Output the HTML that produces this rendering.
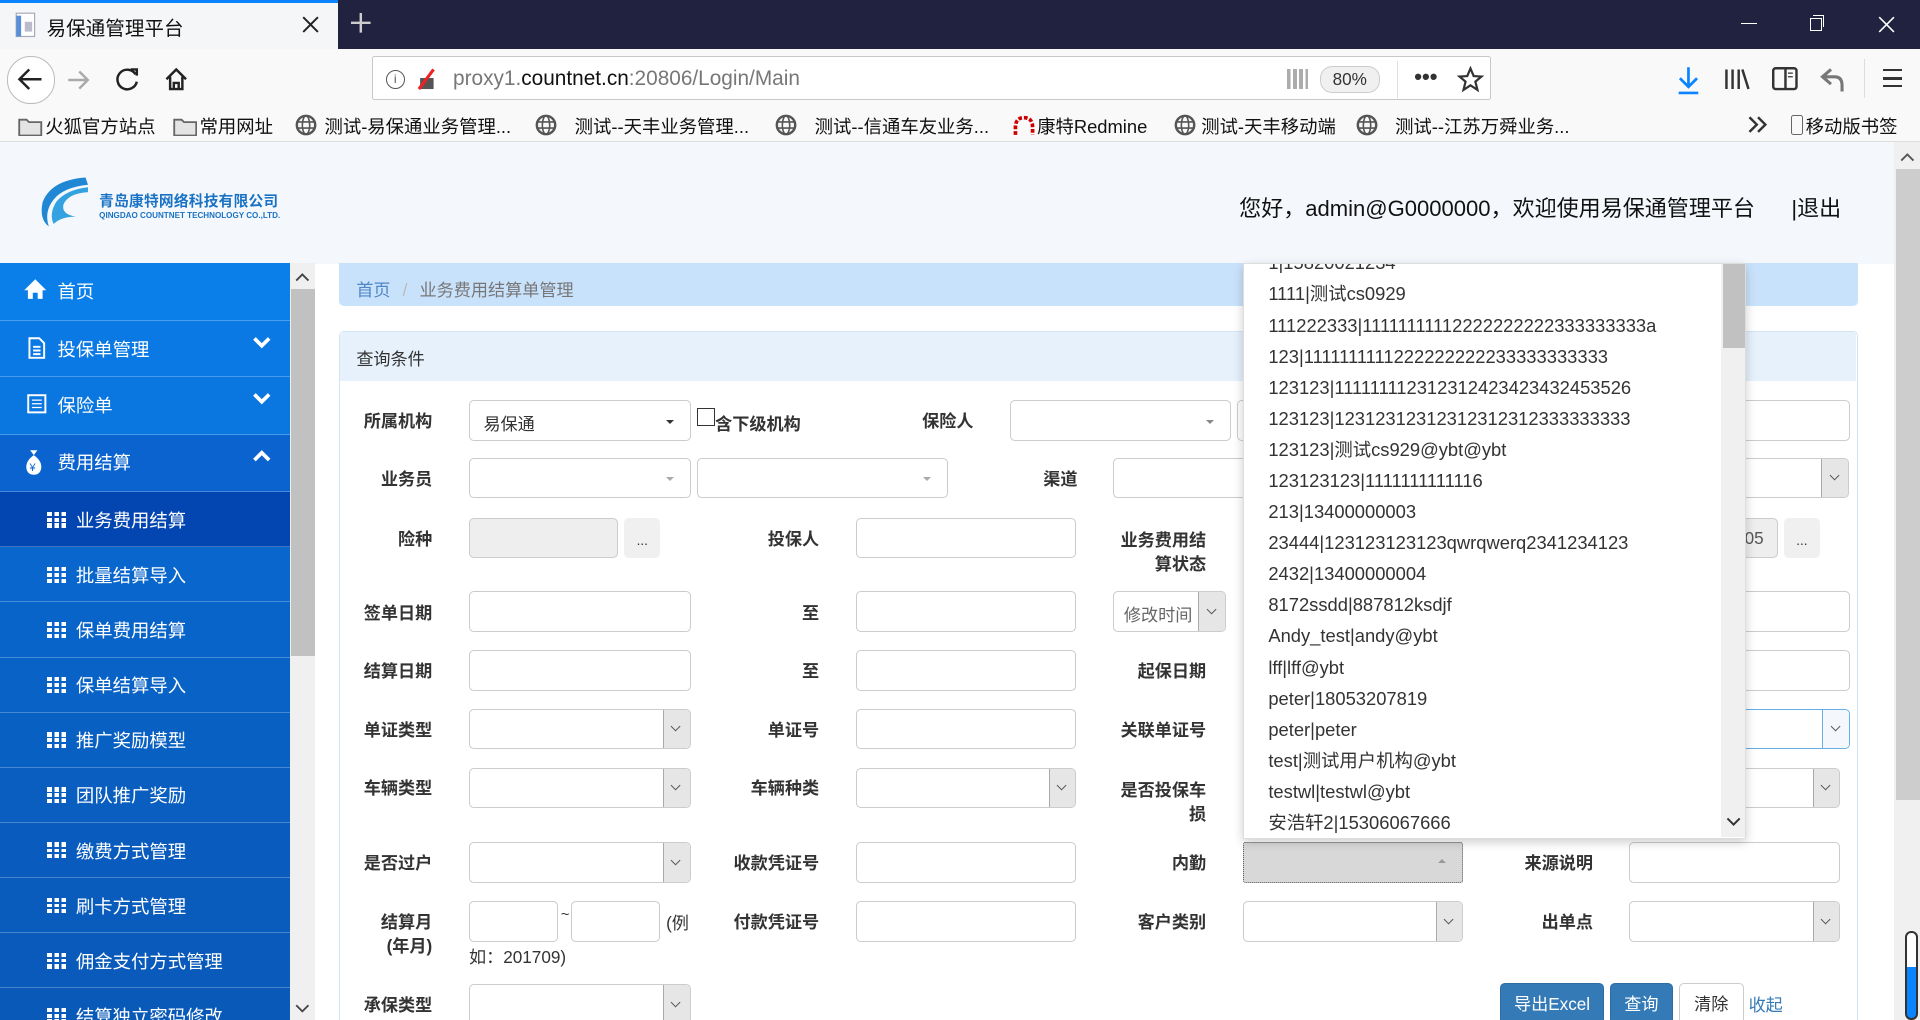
<!DOCTYPE html>
<html><head><meta charset="utf-8">
<style>
html,body{margin:0;padding:0;width:1920px;height:1020px;overflow:hidden;background:#fff;}
#w{zoom:1.22449;width:1568px;height:833px;position:relative;overflow:hidden;font-family:"Liberation Sans","Noto Sans CJK SC",sans-serif;color:#333;}
.a{position:absolute;}
.lb{position:absolute;width:140px;text-align:right;font-weight:bold;font-size:14px;color:#333;line-height:20px;}
.in{position:absolute;box-sizing:border-box;border:1px solid #ccc;border-radius:4px;background:#fff;height:33px;}
.sa{position:absolute;right:0;top:0;bottom:0;width:21px;background:#e6e6e6;border-left:1px solid #aaa;border-radius:0 3px 3px 0;}
.sa:after{content:"";position:absolute;left:7px;top:11px;width:5px;height:5px;border-right:1px solid #555;border-bottom:1px solid #555;transform:rotate(45deg);}
.ct{position:absolute;right:13px;top:15px;width:0;height:0;border-left:4px solid transparent;border-right:4px solid transparent;border-top:4px solid #888;}
.nav{position:absolute;left:0;width:237px;height:45px;border-bottom:1px solid rgba(255,255,255,.25);color:#fff;font-size:15px;box-sizing:border-box;}
.nav span{position:absolute;top:12px;}
.sub span{left:62px;}
.g{position:absolute;left:38px;top:16px;width:16px;height:13px;background:
linear-gradient(90deg,#fff 4px,transparent 4px,transparent 6px,#fff 6px,#fff 10px,transparent 10px,transparent 12px,#fff 12px);}
.g i{position:absolute;left:0;width:16px;height:1.5px;background:#0860c6;}
.dd div{height:25.4px;line-height:25px;font-size:15px;color:#333;padding-left:20px;white-space:nowrap;}
.bm{position:absolute;top:92px;font-size:15px;color:#111;}
.bm svg{vertical-align:-3px;margin-right:6px;}
.btn{position:absolute;height:33px;line-height:33px;font-size:14px;text-align:center;border-radius:4px;box-sizing:border-box;}
</style></head><body>
<div id="w">
<!-- tab bar -->
<div class="a" style="left:0;top:0;width:1568px;height:40px;background:#20223f"></div>
<div class="a" style="left:0;top:0;width:276px;height:40px;background:#f5f6f7;border-top:3px solid #0a84ff;box-sizing:border-box"></div>
<svg class="a" style="left:12px;top:10px" width="20" height="22"><rect x="1" y="1" width="15" height="19" fill="#fff" stroke="#aab"/><rect x="1" y="3" width="4" height="17" fill="#5a8fd8"/><rect x="8" y="8" width="6" height="8" fill="#bbc"/></svg>
<div class="a" style="left:38px;top:10px;font-size:16px;color:#111">易保通管理平台</div>
<svg class="a" style="left:247px;top:13px" width="14" height="14"><path d="M1 1 L13 13 M13 1 L1 13" stroke="#222" stroke-width="1.6"/></svg>
<svg class="a" style="left:287px;top:11px" width="16" height="16"><path d="M8 0 V16 M0 8 H16" stroke="#ccc" stroke-width="2"/></svg>
<div class="a" style="left:1422px;top:19px;width:13px;height:1px;background:#fff"></div>
<div class="a" style="left:1478px;top:15px;width:8px;height:9px;border:1px solid #fff"></div>
<div class="a" style="left:1481px;top:12px;width:8px;height:9px;border-top:1px solid #fff;border-right:1px solid #fff"></div>
<svg class="a" style="left:1534px;top:13px" width="14" height="14"><path d="M1 1 L13 13 M13 1 L1 13" stroke="#fff" stroke-width="1.3"/></svg>
<!-- nav bar -->
<div class="a" style="left:0;top:40px;width:1568px;height:48px;background:#f9f9fa"></div>
<div class="a" style="left:6px;top:46px;width:37px;height:37px;border:1px solid #bbb;border-radius:50%;background:#fff"></div>
<svg class="a" style="left:14px;top:55px" width="22" height="20"><path d="M20 10 H3 M10 2 L2 10 L10 18" fill="none" stroke="#222" stroke-width="2"/></svg>
<svg class="a" style="left:55px;top:56px" width="20" height="18"><path d="M1 9 H17 M10 2 L17 9 L10 16" fill="none" stroke="#aaa" stroke-width="2"/></svg>
<svg class="a" style="left:95px;top:55px" width="20" height="20"><path d="M16 6 A8 8 0 1 0 17 12" fill="none" stroke="#222" stroke-width="2"/><path d="M12 2 H17 V7" fill="none" stroke="#222" stroke-width="2"/></svg>
<svg class="a" style="left:134px;top:55px" width="20" height="20"><path d="M2 10 L10 2 L18 10 M5 8 V18 H15 V8 M8 18 V13 H12 V18" fill="none" stroke="#222" stroke-width="2"/></svg>
<div class="a" style="left:304px;top:46px;width:914px;height:36px;background:#fff;border:1px solid #c8c8c8;border-radius:2px;box-sizing:border-box"></div>
<div class="a" style="left:315px;top:57px;width:14px;height:14px;border:1.5px solid #555;border-radius:50%;font-size:10px;text-align:center;line-height:14px;color:#555">i</div>
<svg class="a" style="left:338px;top:55px" width="20" height="20"><rect x="5" y="9" width="11" height="9" fill="#555"/><path d="M4 18 L16 2" stroke="#e22" stroke-width="2.5"/></svg>
<div class="a" style="left:370px;top:55px;font-size:17px;color:#777">proxy1.<span style="color:#111">countnet.cn</span>:20806/Login/Main</div>
<div class="a" style="left:1051px;top:56px;width:17px;height:17px;background:repeating-linear-gradient(90deg,#888 0 3px,#fff 3px 5px);opacity:.7"></div>
<div class="a" style="left:1078px;top:54px;width:47px;height:20px;border:1px solid #ccc;border-radius:10px;background:#f0f0f0;font-size:14px;text-align:center;line-height:20px">80%</div>
<div class="a" style="left:1141px;top:50px;width:1px;height:30px;background:#e0e0e0"></div>
<div class="a" style="left:1155px;top:52px;font-size:18px;color:#333;font-weight:bold">•••</div>
<svg class="a" style="left:1190px;top:54px" width="22" height="22"><path d="M11 2 L13.6 8.2 L20 8.6 L15 12.8 L16.7 19.5 L11 15.8 L5.3 19.5 L7 12.8 L2 8.6 L8.4 8.2 Z" fill="none" stroke="#333" stroke-width="1.8"/></svg>
<svg class="a" style="left:1368px;top:54px" width="22" height="24"><path d="M11 1 V17 M4 10 L11 17 L18 10 M3 22 H19" fill="none" stroke="#0a84ff" stroke-width="2.2"/></svg>
<svg class="a" style="left:1408px;top:55px" width="22" height="20"><path d="M2 2 V18 M7 2 V18 M12 2 V18 M15 2 L20 18" fill="none" stroke="#333" stroke-width="2"/></svg>
<svg class="a" style="left:1447px;top:55px" width="22" height="20"><rect x="1" y="1" width="19" height="17" rx="2" fill="none" stroke="#333" stroke-width="2"/><path d="M11 1 V18" stroke="#333" stroke-width="2"/><path d="M13 5 H17 M13 8 H17" stroke="#333"/></svg>
<svg class="a" style="left:1486px;top:55px" width="22" height="22"><path d="M9 2 L2 8 L9 14 M2 8 H12 Q18 8 18 15 V20" fill="none" stroke="#777" stroke-width="2.5"/></svg>
<div class="a" style="left:1522px;top:48px;width:1px;height:32px;background:#ddd"></div>
<div class="a" style="left:1538px;top:56px;width:15px;height:15px;border-top:2px solid #333;border-bottom:2px solid #333;box-sizing:border-box"></div>
<div class="a" style="left:1538px;top:63px;width:15px;height:2px;background:#333"></div>
<!-- bookmarks -->
<div class="a" style="left:0;top:88px;width:1568px;height:28px;background:#f9f9fa;border-bottom:1px solid #ddd;box-sizing:border-box"></div>
<div class="bm" style="left:15px"><svg width="20" height="17" style="margin-right:2px"><path d="M1 3 H7 L9 5 H19 V16 H1 Z" fill="#e4e4e4" stroke="#666" stroke-width="1.5"/></svg>火狐官方站点</div>
<div class="bm" style="left:141px"><svg width="20" height="17" style="margin-right:2px"><path d="M1 3 H7 L9 5 H19 V16 H1 Z" fill="#e4e4e4" stroke="#666" stroke-width="1.5"/></svg>常用网址</div>
<div class="bm" style="left:241px"><svg width="18" height="18"><circle cx="9" cy="9" r="7.5" fill="none" stroke="#555" stroke-width="2"/><ellipse cx="9" cy="9" rx="3" ry="7.5" fill="none" stroke="#555" stroke-width="1.3"/><path d="M2 6.5 H16 M2 11.5 H16" stroke="#555" stroke-width="1.3"/></svg>测试-易保通业务管理...</div>
<div class="bm" style="left:437px"><svg width="18" height="18"><circle cx="9" cy="9" r="7.5" fill="none" stroke="#555" stroke-width="2"/><ellipse cx="9" cy="9" rx="3" ry="7.5" fill="none" stroke="#555" stroke-width="1.3"/><path d="M2 6.5 H16 M2 11.5 H16" stroke="#555" stroke-width="1.3"/></svg>&nbsp;&nbsp;测试--天丰业务管理...</div>
<div class="bm" style="left:633px"><svg width="18" height="18"><circle cx="9" cy="9" r="7.5" fill="none" stroke="#555" stroke-width="2"/><ellipse cx="9" cy="9" rx="3" ry="7.5" fill="none" stroke="#555" stroke-width="1.3"/><path d="M2 6.5 H16 M2 11.5 H16" stroke="#555" stroke-width="1.3"/></svg>&nbsp;&nbsp;测试--信通车友业务...</div>
<div class="bm" style="left:827px"><svg width="18" height="18" style="margin-right:2px"><path d="M2 17 V11 Q2 3 9 3 Q16 3 16 11 V17" fill="none" stroke="#c00" stroke-width="3" stroke-dasharray="3 1.5"/></svg>康特Redmine</div>
<div class="bm" style="left:959px"><svg width="18" height="18" style="margin-right:4px"><circle cx="9" cy="9" r="7.5" fill="none" stroke="#555" stroke-width="2"/><ellipse cx="9" cy="9" rx="3" ry="7.5" fill="none" stroke="#555" stroke-width="1.3"/><path d="M2 6.5 H16 M2 11.5 H16" stroke="#555" stroke-width="1.3"/></svg>测试-天丰移动端</div>
<div class="bm" style="left:1107px"><svg width="18" height="18"><circle cx="9" cy="9" r="7.5" fill="none" stroke="#555" stroke-width="2"/><ellipse cx="9" cy="9" rx="3" ry="7.5" fill="none" stroke="#555" stroke-width="1.3"/><path d="M2 6.5 H16 M2 11.5 H16" stroke="#555" stroke-width="1.3"/></svg>&nbsp;&nbsp;测试--江苏万舜业务...</div>
<svg class="a" style="left:1427px;top:95px" width="18" height="14"><path d="M2 1 L8 7 L2 13 M9 1 L15 7 L9 13" fill="none" stroke="#333" stroke-width="2"/></svg>
<div class="bm" style="left:1463px"><span style="display:inline-block;width:8px;height:15px;border:1.5px solid #666;border-radius:2px;vertical-align:-2px;margin-right:2px"></span>移动版书签</div>
<!-- page header -->
<div class="a" style="left:0;top:116px;width:1547px;height:100px;background:#f4f8fd"></div>
<svg class="a" style="left:32px;top:143px" width="44" height="44"><path d="M38 2 Q10 4 3 22 Q0 36 8 42 Q4 30 12 20 Q20 10 40 8 Z" fill="#1f87d3"/><path d="M40 10 Q22 12 14 22 Q8 32 12 40 Q18 34 30 34 Q18 32 20 24 Q24 15 40 14 Z" fill="#34a2e0"/></svg>
<div class="a" style="left:81px;top:155px;font-size:12px;font-weight:bold;color:#1a72c4;letter-spacing:.2px">青岛康特网络科技有限公司</div>
<div class="a" style="left:81px;top:172px;font-size:6.6px;font-weight:bold;color:#1a72c4">QINGDAO COUNTNET TECHNOLOGY CO.,LTD.</div>
<div class="a" style="left:1012px;top:156px;font-size:18px;color:#111">您好，admin@G0000000，欢迎使用易保通管理平台</div>
<div class="a" style="left:1463px;top:156px;font-size:18px;color:#111">|退出</div>
<!-- page scrollbar -->
<div class="a" style="left:1547px;top:116px;width:21px;height:717px;background:#f0f0f0"></div>
<div class="a" style="left:1548px;top:138px;width:20px;height:515px;background:#cdcdcd"></div>
<svg class="a" style="left:1552px;top:124px" width="12" height="8"><path d="M1 7 L6 2 L11 7" fill="none" stroke="#555" stroke-width="1.5"/></svg>
<div class="a" style="left:1556px;top:760px;width:7px;height:70px;border:2px solid #333;border-radius:5px;background:linear-gradient(#fff 40%,#0a84ff 40%)"></div>
<!-- sidebar -->
<div class="a" style="left:0;top:215px;width:237px;height:618px;background:linear-gradient(#0b7ee9,#0a74dc 30%,#0a63c6 60%,#0a5ab8)"></div>
<div class="nav" style="top:215px;height:47px;background:#0a7fe9"><svg class="a" style="left:19px;top:12px" width="20" height="18"><path d="M10 1 L1 10 H4 V17 H8 V12 H12 V17 H16 V10 H19 Z" fill="#fff"/></svg><span style="left:47px">首页</span></div>
<div class="nav" style="top:262px;height:46px;background:#0a79e4"><svg class="a" style="left:22px;top:13px" width="16" height="18"><path d="M2 1 H10 L14 5 V17 H2 Z M5 8 H11 M5 11 H11 M5 14 H11" fill="none" stroke="#fff" stroke-width="1.6"/></svg><span style="left:47px">投保单管理</span><svg class="a" style="left:206px;top:12px" width="16" height="12"><path d="M2 2 L8 8 L14 2" fill="none" stroke="#fff" stroke-width="3"/></svg></div>
<div class="nav" style="top:308px;height:47px;background:#0a76e0"><svg class="a" style="left:22px;top:14px" width="16" height="16"><rect x="1" y="1" width="14" height="14" fill="none" stroke="#fff" stroke-width="1.6"/><path d="M4 5 H12 M4 8 H12 M4 11 H12" stroke="#fff"/></svg><span style="left:47px">保险单</span><svg class="a" style="left:206px;top:12px" width="16" height="12"><path d="M2 2 L8 8 L14 2" fill="none" stroke="#fff" stroke-width="3"/></svg></div>
<div class="nav" style="top:355px;height:47px;background:#0a63cf"><svg class="a" style="left:20px;top:12px" width="16" height="22"><path d="M5 1 L8 5 L11 1 M8 5 Q1 10 2 16 Q3 21 8 21 Q13 21 14 16 Q15 10 8 5" fill="#fff"/><text x="4.5" y="18" font-size="9" fill="#0a63cf" font-family="Liberation Sans">¥</text></svg><span style="left:47px">费用结算</span><svg class="a" style="left:206px;top:12px" width="16" height="12"><path d="M2 9 L8 3 L14 9" fill="none" stroke="#fff" stroke-width="3"/></svg></div>
<div class="nav sub" style="top:402px;background:#0446b1"><div class="g"><i style="top:3.5px;background:#0446b1"></i><i style="top:8px;background:#0446b1"></i></div><span>业务费用结算</span></div>
<div class="nav sub" style="top:447px;background:#0966cc"><div class="g"><i style="top:3.5px;background:#0966cc"></i><i style="top:8px;background:#0966cc"></i></div><span>批量结算导入</span></div>
<div class="nav sub" style="top:492px;background:#0964c9"><div class="g"><i style="top:3.5px;background:#0964c9"></i><i style="top:8px;background:#0964c9"></i></div><span>保单费用结算</span></div>
<div class="nav sub" style="top:537px;background:#0962c6"><div class="g"><i style="top:3.5px;background:#0962c6"></i><i style="top:8px;background:#0962c6"></i></div><span>保单结算导入</span></div>
<div class="nav sub" style="top:582px;background:#0960c3"><div class="g"><i style="top:3.5px;background:#0960c3"></i><i style="top:8px;background:#0960c3"></i></div><span>推广奖励模型</span></div>
<div class="nav sub" style="top:627px;background:#095ec0"><div class="g"><i style="top:3.5px;background:#095ec0"></i><i style="top:8px;background:#095ec0"></i></div><span>团队推广奖励</span></div>
<div class="nav sub" style="top:672px;background:#095cbe"><div class="g"><i style="top:3.5px;background:#095cbe"></i><i style="top:8px;background:#095cbe"></i></div><span>缴费方式管理</span></div>
<div class="nav sub" style="top:717px;background:#095bbc"><div class="g"><i style="top:3.5px;background:#095bbc"></i><i style="top:8px;background:#095bbc"></i></div><span>刷卡方式管理</span></div>
<div class="nav sub" style="top:762px;background:#095aba"><div class="g"><i style="top:3.5px;background:#095aba"></i><i style="top:8px;background:#095aba"></i></div><span>佣金支付方式管理</span></div>
<div class="nav sub" style="top:807px;background:#0959b8"><div class="g"><i style="top:3.5px;background:#0959b8"></i><i style="top:8px;background:#0959b8"></i></div><span>结算独立密码修改</span></div>
<!-- sidebar scrollbar -->
<div class="a" style="left:237px;top:215px;width:20px;height:618px;background:#f0f0f0"></div>
<div class="a" style="left:238px;top:236px;width:19px;height:300px;background:#c1c1c1"></div>
<svg class="a" style="left:241px;top:222px" width="12" height="8"><path d="M1 7 L6 2 L11 7" fill="none" stroke="#444" stroke-width="1.5"/></svg>
<svg class="a" style="left:241px;top:820px" width="12" height="8"><path d="M1 1 L6 6 L11 1" fill="none" stroke="#444" stroke-width="1.5"/></svg>
<!-- breadcrumb -->
<div class="a" style="left:277px;top:215px;width:1240px;height:35px;background:#c9e2fb;border-radius:0 0 4px 4px"></div>
<div class="a" style="left:291px;top:225px;font-size:14px;color:#4f86c6">首页 <span style="color:#bbb;margin:0 6px">/</span> <span style="color:#777">业务费用结算单管理</span></div>
<!-- panel -->
<div class="a" style="left:277px;top:270px;width:1240px;height:600px;border:1px solid #d3e4f5;border-radius:4px;box-sizing:border-box"></div>
<div class="a" style="left:278px;top:271px;width:1238px;height:40px;background:#e6f1fc"></div>
<div class="a" style="left:291px;top:282px;font-size:14px;color:#333">查询条件</div>

<!-- row1 c=343 -->
<div class="lb" style="left:213px;top:334px">所属机构</div>
<div class="in" style="left:383px;top:327px;width:181px"><span class="a" style="left:11px;top:7px;font-size:14px">易保通</span><i class="ct" style="border-top-color:#333"></i></div>
<div class="a" style="left:569px;top:333px;width:15px;height:15px;border:1px solid #333;box-sizing:border-box"></div>
<div class="a" style="left:584px;top:335px;font-size:14px;font-weight:bold">含下级机构</div>
<div class="lb" style="left:655px;top:334px">保险人</div>
<div class="in" style="left:825px;top:327px;width:180px"><i class="ct"></i></div>
<div class="in" style="left:1010px;top:327px;width:20px"></div>
<div class="in" style="left:1400px;top:327px;width:111px"></div>
<!-- row2 c=390 -->
<div class="lb" style="left:213px;top:381px">业务员</div>
<div class="in" style="left:383px;top:374px;width:181px"><i class="ct" style="border-top-color:#aaa"></i></div>
<div class="in" style="left:569px;top:374px;width:205px"><i class="ct" style="border-top-color:#aaa"></i></div>
<div class="lb" style="left:740px;top:381px">渠道</div>
<div class="in" style="left:909px;top:374px;width:120px"></div>
<div class="in" style="left:1400px;top:374px;width:110px"><div class="sa"></div></div>
<!-- row3 c=440 -->
<div class="lb" style="left:213px;top:430px">险种</div>
<div class="in" style="left:383px;top:423px;width:122px;background:#eee"></div>
<div class="btn" style="left:510px;top:423px;width:29px;background:#f0f0f0;font-size:11px;line-height:38px">...</div>
<div class="lb" style="left:529px;top:430px">投保人</div>
<div class="in" style="left:699px;top:423px;width:180px"></div>
<div class="lb" style="left:845px;top:431px">业务费用结<br>算状态</div>
<div class="in" style="left:1400px;top:423px;width:52px;background:#eee"><span class="a" style="left:24px;top:7px;font-size:14px;color:#555">05</span></div>
<div class="btn" style="left:1457px;top:423px;width:29px;background:#f0f0f0;font-size:11px;line-height:38px">...</div>
<!-- row4 c=500 -->
<div class="lb" style="left:213px;top:491px">签单日期</div>
<div class="in" style="left:383px;top:483px;width:181px"></div>
<div class="lb" style="left:529px;top:491px">至</div>
<div class="in" style="left:699px;top:483px;width:180px"></div>
<div class="in" style="left:909px;top:483px;width:92px"><span class="a" style="left:8px;top:7px;font-size:14px;color:#666">修改时间</span><div class="sa"></div></div>
<div class="in" style="left:1400px;top:483px;width:111px"></div>
<!-- row5 c=547 -->
<div class="lb" style="left:213px;top:538px">结算日期</div>
<div class="in" style="left:383px;top:531px;width:181px"></div>
<div class="lb" style="left:529px;top:538px">至</div>
<div class="in" style="left:699px;top:531px;width:180px"></div>
<div class="lb" style="left:845px;top:538px">起保日期</div>
<div class="in" style="left:1400px;top:531px;width:111px"></div>
<!-- row6 c=595 -->
<div class="lb" style="left:213px;top:586px">单证类型</div>
<div class="in" style="left:383px;top:579px;width:181px"><div class="sa"></div></div>
<div class="lb" style="left:529px;top:586px">单证号</div>
<div class="in" style="left:699px;top:579px;width:180px"></div>
<div class="lb" style="left:845px;top:586px">关联单证号</div>
<div class="in" style="left:1400px;top:579px;width:111px;border-color:#66afe9"><div class="sa" style="background:#f4f8fc;border-left-color:#66afe9"></div></div>
<!-- row7 c=643 -->
<div class="lb" style="left:213px;top:634px">车辆类型</div>
<div class="in" style="left:383px;top:627px;width:181px"><div class="sa"></div></div>
<div class="lb" style="left:529px;top:634px">车辆种类</div>
<div class="in" style="left:699px;top:627px;width:180px"><div class="sa"></div></div>
<div class="lb" style="left:845px;top:635px">是否投保车<br>损</div>
<div class="in" style="left:1400px;top:627px;width:103px"><div class="sa"></div></div>
<!-- row8 c=704 -->
<div class="lb" style="left:213px;top:695px">是否过户</div>
<div class="in" style="left:383px;top:688px;width:181px"><div class="sa"></div></div>
<div class="lb" style="left:529px;top:695px">收款凭证号</div>
<div class="in" style="left:699px;top:688px;width:180px"></div>
<div class="lb" style="left:845px;top:695px">内勤</div>
<div class="in" style="left:1015px;top:688px;width:180px;background:#d8d8d8;border:1px dotted #555;border-radius:2px"><i class="ct" style="border-top:none;border-bottom:4px solid #999;top:13px"></i></div>
<div class="lb" style="left:1161px;top:695px">来源说明</div>
<div class="in" style="left:1330px;top:688px;width:173px"></div>
<!-- row9 c=752 -->
<div class="lb" style="left:213px;top:743px">结算月<br>(年月)</div>
<div class="in" style="left:383px;top:736px;width:73px"></div>
<div class="a" style="left:458px;top:741px;font-size:12px">~</div>
<div class="in" style="left:466px;top:736px;width:73px"></div>
<div class="a" style="left:544px;top:742px;font-size:14px">(例</div>
<div class="a" style="left:383px;top:770px;font-size:14px">如：201709)</div>
<div class="lb" style="left:529px;top:743px">付款凭证号</div>
<div class="in" style="left:699px;top:736px;width:180px"></div>
<div class="lb" style="left:845px;top:743px">客户类别</div>
<div class="in" style="left:1015px;top:736px;width:180px"><div class="sa"></div></div>
<div class="lb" style="left:1161px;top:743px">出单点</div>
<div class="in" style="left:1330px;top:736px;width:173px"><div class="sa"></div></div>
<!-- row10 c=820 -->
<div class="lb" style="left:213px;top:811px">承保类型</div>
<div class="in" style="left:383px;top:804px;width:181px"><div class="sa"></div></div>
<div class="btn" style="left:1225px;top:803px;width:85px;background:#337ab7;color:#fff;border:1px solid #2e6da4">导出Excel</div>
<div class="btn" style="left:1315px;top:803px;width:51px;background:#337ab7;color:#fff;border:1px solid #2e6da4">查询</div>
<div class="btn" style="left:1371px;top:803px;width:53px;background:#fff;color:#333;border:1px solid #ccc">清除</div>
<div class="a" style="left:1428px;top:809px;font-size:14px;color:#337ab7">收起</div>

<!-- dropdown -->
<div class="a dd" style="left:1015px;top:215px;width:411px;height:470px;background:#fff;border:1px solid #ddd;box-shadow:0 3px 8px rgba(0,0,0,.2);overflow:hidden;box-sizing:border-box">
<div style="margin-top:-13px">1|15820021234</div>
<div>1111|测试cs0929</div>
<div>111222333|11111111112222222222333333333a</div>
<div>123|1111111111222222222233333333333</div>
<div>123123|111111112312312423423432453526</div>
<div>123123|12312312312312312312333333333</div>
<div>123123|测试cs929@ybt@ybt</div>
<div>123123123|1111111111116</div>
<div>213|13400000003</div>
<div>23444|123123123123qwrqwerq2341234123</div>
<div>2432|13400000004</div>
<div>8172ssdd|887812ksdjf</div>
<div>Andy_test|andy@ybt</div>
<div>lff|lff@ybt</div>
<div>peter|18053207819</div>
<div>peter|peter</div>
<div>test|测试用户机构@ybt</div>
<div>testwl|testwl@ybt</div>
<div>安浩轩2|15306067666</div>
<div class="a" style="left:390px;top:0;width:20px;height:468px;background:#f0f0f0;padding:0"></div>
<div class="a" style="left:391px;top:0;width:19px;height:68px;background:#c1c1c1;padding:0"></div>
<svg class="a" style="left:393px;top:451px" width="14" height="10"><path d="M2 2 L7 7 L12 2" fill="none" stroke="#333" stroke-width="1.6"/></svg>
</div>
</div>
</body></html>
